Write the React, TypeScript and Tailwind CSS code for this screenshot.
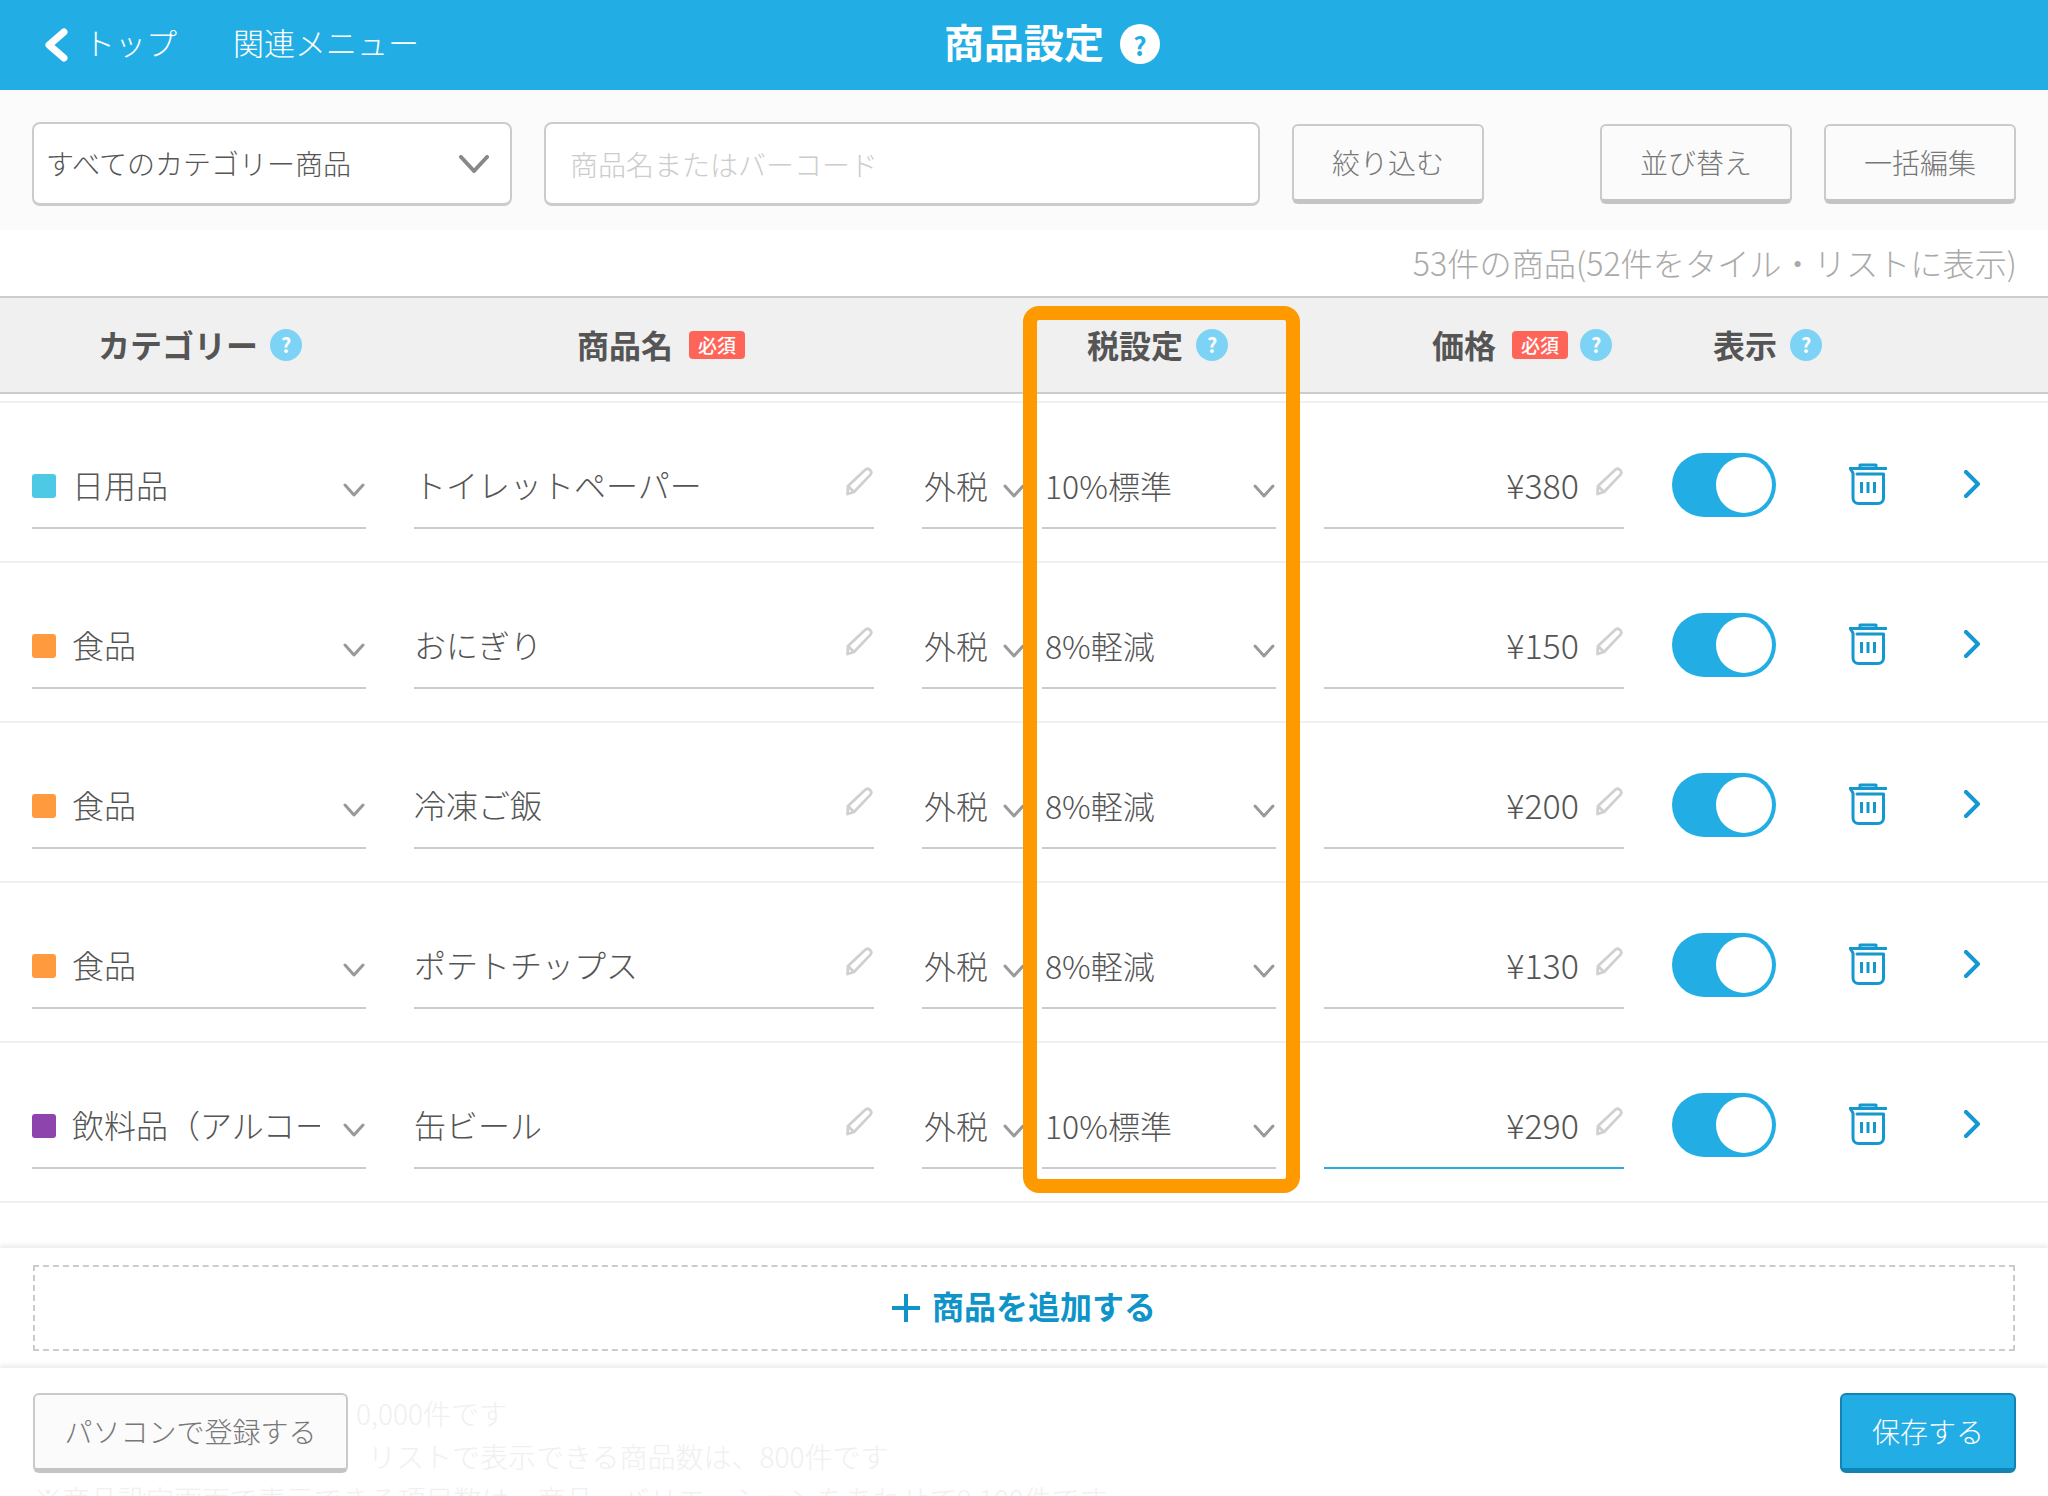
const rows = [
  { swatch: 'bg-[#4dc9e6]', category: '日用品', name: 'トイレットペーパー', rate: '10%標準', price: '¥380', focus: false },
  { swatch: 'bg-[#ff9a3e]', category: '食品', name: 'おにぎり', rate: '8%軽減', price: '¥150', focus: false },
  { swatch: 'bg-[#ff9a3e]', category: '食品', name: '冷凍ご飯', rate: '8%軽減', price: '¥200', focus: false },
  { swatch: 'bg-[#ff9a3e]', category: '食品', name: 'ポテトチップス', rate: '8%軽減', price: '¥130', focus: false },
  { swatch: 'bg-[#8e44ad]', category: '飲料品（アルコール）', name: '缶ビール', rate: '10%標準', price: '¥290', focus: true },
]

function Chevron() {
  return (
    <svg width="22" height="14" viewBox="0 0 22 14" fill="none" className="shrink-0 mt-[12px]">
      <path d="M2 2 L11 12 L20 2" stroke="#999" strokeWidth="3" strokeLinecap="round" strokeLinejoin="round" />
    </svg>
  )
}

function Pencil() {
  return (
    <svg width="29" height="29" viewBox="0 0 29 29" fill="none" className="shrink-0 -mt-[5px]">
      <path
        d="M3 19 L20 3 a3.6 3.6 0 0 1 5.5 4.6 L9 25 L2.5 27 Z M3.5 19.5 L8.5 24.5"
        stroke="#d0d0d0"
        strokeWidth="2.8"
        strokeLinejoin="round"
      />
    </svg>
  )
}

function Help({ dark }: { dark?: boolean }) {
  return (
    <span
      className={
        dark
          ? 'flex h-[40px] w-[40px] items-center justify-center rounded-full bg-white text-[26px] font-bold text-[#22aee5]'
          : 'flex h-[32px] w-[32px] items-center justify-center rounded-full bg-[#7dd3f5] text-[20px] font-bold text-white'
      }
    >
      ?
    </span>
  )
}

function Required() {
  return (
    <span className="flex h-[28px] w-[56px] items-center justify-center rounded-[4px] bg-[#ff6459] text-[19px] font-medium text-white">
      必須
    </span>
  )
}

function Trash() {
  return (
    <svg width="38" height="42" viewBox="0 0 38 42" fill="none" className="shrink-0">
      <path
        d="M11 5 V2 H27 V5 M1 5.5 H37 M1.5 6 L4 10 V35 a5.5 5.5 0 0 0 5.5 5.5 H29 a5.5 5.5 0 0 0 5.5 -5.5 V11 H8"
        stroke="#1597cf"
        strokeWidth="3"
        strokeLinejoin="round"
        strokeLinecap="round"
      />
      <path d="M12.5 19 V30 M19 19 V30 M25.5 19 V30" stroke="#1597cf" strokeWidth="3" />
    </svg>
  )
}

function SideButton({ label, width }: { label: string; width: string }) {
  return (
    <button
      type="button"
      className={`${width} h-[80px] shrink-0 rounded-[6px] border-2 border-b-[5px] border-[#cacaca] border-b-[#c4c4c4] bg-[#fbfbfb] pb-[2px] text-[28px] text-[#777]`}
    >
      {label}
    </button>
  )
}

export default function App() {
  return (
    <div className="relative flex h-[1496px] w-[2048px] flex-col overflow-hidden bg-white font-['Noto_Sans_CJK_JP','Noto_Sans',sans-serif] font-light text-[32px] text-[#555]">
      {/* top bar */}
      <div className="relative flex h-[90px] shrink-0 items-center bg-[#22aee5] text-[31px] text-white">
        <svg width="24" height="34" viewBox="0 0 24 34" fill="none" className="ml-[44px] shrink-0">
          <path d="M20 4 L5 17 L20 30" stroke="#fff" strokeWidth="7" strokeLinecap="round" strokeLinejoin="round" />
        </svg>
        <span className="ml-[16px] pb-[6px]">トップ</span>
        <span className="ml-[56px] pb-[6px]">関連メニュー</span>
        <div className="absolute left-[944px] top-[24px] flex items-center gap-[16px]">
          <span className="-mt-[6px] text-[40px] font-bold leading-[40px]">商品設定</span>
          <Help dark />
        </div>
      </div>

      {/* filters */}
      <div className="flex h-[140px] shrink-0 items-start bg-[#fbfbfb] pl-[32px] pt-[32px]">
        <div className="flex h-[84px] w-[480px] shrink-0 items-center justify-between rounded-[8px] border-2 border-b-[3px] border-[#cccccc] bg-white pl-[12px] pr-[21px] text-[28px]">
          <span className="pb-[2px]">すべてのカテゴリー商品</span>
          <svg width="30" height="18" viewBox="0 0 30 18" fill="none">
            <path d="M2 2 L15 16 L28 2" stroke="#888" strokeWidth="4" strokeLinecap="round" strokeLinejoin="round" />
          </svg>
        </div>
        <div className="ml-[32px] flex h-[84px] w-[716px] shrink-0 items-center rounded-[8px] border-2 border-b-[3px] border-[#cccccc] bg-white pl-[24px] text-[28px] text-[#cccccc]">
          商品名またはバーコード
        </div>
        <div className="ml-[32px] mt-[2px]">
          <SideButton label="絞り込む" width="w-[192px]" />
        </div>
        <div className="ml-[116px] mt-[2px]">
          <SideButton label="並び替え" width="w-[192px]" />
        </div>
        <div className="ml-[32px] mt-[2px]">
          <SideButton label="一括編集" width="w-[192px]" />
        </div>
      </div>

      {/* count */}
      <div className="flex h-[66px] shrink-0 items-center justify-end pb-[2px] pr-[31px] text-[32.2px] text-[#aaa]">
        53件の商品(52件をタイル・リストに表示)
      </div>

      {/* table head */}
      <div className="flex h-[98px] shrink-0 items-center border-y-2 border-[#cccccc] bg-[#f0f0f0] font-bold">
        <div className="ml-[98px] flex items-center gap-[12px]">
          <span className="pb-[2px]">カテゴリー</span>
          <Help />
        </div>
        <div className="ml-[275px] flex items-center gap-[16px]">
          <span className="pb-[2px]">商品名</span>
          <Required />
        </div>
        <div className="ml-[342px] flex items-center gap-[13px]">
          <span className="pb-[2px]">税設定</span>
          <Help />
        </div>
        <div className="ml-[204px] flex items-center gap-[12px]">
          <span className="mr-[4px] pb-[2px]">価格</span>
          <Required />
          <Help />
        </div>
        <div className="ml-[101px] flex items-center gap-[13px]">
          <span className="pb-[2px]">表示</span>
          <Help />
        </div>
      </div>

      {/* rows */}
      <div className="mt-[7px] shrink-0 border-t-2 border-[#f0f0f0]">
        {rows.map((row) => (
          <div key={row.name} className="flex h-[160px] items-start border-b-2 border-[#f0f0f0] pl-[32px]">
            <div className="flex h-[126px] w-[334px] shrink-0 items-center border-b-2 border-[#cccccc] pt-[38px]">
              <span className={`mt-[4px] h-[24px] w-[24px] shrink-0 rounded-[3px] ${row.swatch}`} />
              <span className="ml-[16px] w-[248px] shrink-0 overflow-hidden whitespace-nowrap">{row.category}</span>
              <span className="ml-[23px] flex">
                <Chevron />
              </span>
            </div>
            <div className="ml-[48px] flex h-[126px] w-[460px] shrink-0 items-center justify-between border-b-2 border-[#cccccc] pt-[38px]">
              <span>{row.name}</span>
              <Pencil />
            </div>
            <div className="ml-[48px] flex h-[126px] w-[108px] shrink-0 items-center justify-between border-b-2 border-[#cccccc] pl-[2px] pr-[5px] pt-[40px]">
              <span>外税</span>
              <Chevron />
            </div>
            <div className="ml-[12px] flex h-[126px] w-[234px] shrink-0 items-center justify-between border-b-2 border-[#cccccc] pl-[3px] pr-[1px] pt-[40px]">
              <span>{row.rate}</span>
              <Chevron />
            </div>
            <div
              className={`ml-[48px] flex h-[126px] w-[300px] shrink-0 items-center justify-end gap-[16px] border-b-2 pt-[38px] ${
                row.focus ? 'border-[#22aee5]' : 'border-[#cccccc]'
              }`}
            >
              <span className="text-[34px]">{row.price}</span>
              <Pencil />
            </div>
            <div className="ml-[48px] mt-[50px] flex h-[64px] w-[104px] shrink-0 items-center justify-end rounded-full bg-[#22aee5] pr-[4px]">
              <span className="h-[56px] w-[56px] rounded-full bg-white" />
            </div>
            <div className="ml-[73px] mt-[60px] flex shrink-0">
              <Trash />
            </div>
            <svg width="18" height="28" viewBox="0 0 18 28" fill="none" className="ml-[76px] mt-[67px] shrink-0">
              <path d="M3 2 L15 14 L3 26" stroke="#1597cf" strokeWidth="4" strokeLinecap="round" strokeLinejoin="round" />
            </svg>
          </div>
        ))}
      </div>

      {/* add */}
      <div className="mt-[45px] h-[120px] shrink-0 bg-white px-[33px] pt-[17px] shadow-[0_-3px_5px_rgba(0,0,0,0.08)]">
        <div className="flex h-[86px] items-center justify-center gap-[12px] border-2 border-dashed border-[#cccccc] font-semibold text-[#0e94c9]">
          <svg width="28" height="28" viewBox="0 0 28 28" fill="none">
            <path d="M14 0 V28 M0 14 H28" stroke="#0e94c9" strokeWidth="4" />
          </svg>
          <span className="pb-[7px]">商品を追加する</span>
        </div>
      </div>

      {/* footer */}
      <div className="relative flex flex-1 items-start justify-between bg-white pl-[33px] pr-[32px] pt-[25px] shadow-[0_-3px_5px_rgba(0,0,0,0.08)]">
        <div className="absolute left-[34px] top-[24px] text-[28px] leading-[43px] text-[#f0f0f0]">
          <p className="pl-[322px]">0,000件です</p>
          <p className="pl-[334px]">リストで表示できる商品数は、800件です</p>
          <p className="whitespace-nowrap">※商品設定画面で表示できる項目数は、商品・バリエーションをあわせて9,100件です</p>
        </div>
        <div className="relative">
          <SideButton label="パソコンで登録する" width="w-[315px]" />
        </div>
        <button
          type="button"
          className="relative h-[80px] w-[176px] rounded-[6px] border-2 border-b-[5px] border-[#1184b4] bg-[#22aee5] pb-[2px] text-[28px] text-white"
        >
          保存する
        </button>
      </div>

      {/* highlight frame */}
      <div className="pointer-events-none absolute left-[1023px] top-[306px] h-[887px] w-[277px] rounded-[16px] border-[14px] border-[#ff9900]" />
    </div>
  )
}
